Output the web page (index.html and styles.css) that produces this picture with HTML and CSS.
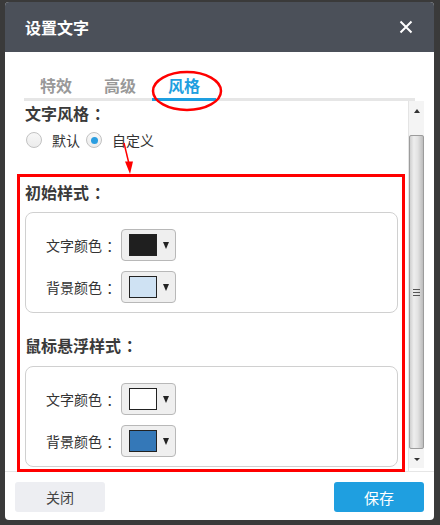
FILE: index.html
```html
<!DOCTYPE html>
<html lang="zh">
<head>
<meta charset="utf-8">
<title>设置文字</title>
<link rel="stylesheet" href="styles.css">
</head>
<body>
<div class="dialog">
  <div class="header">
    <span class="title">设置文字</span>
    <svg class="close" width="14" height="14" viewBox="0 0 14 14"><path d="M1.5 1.5 L12.5 12.5 M12.5 1.5 L1.5 12.5" stroke="#fff" stroke-width="2" fill="none"/></svg>
  </div>
  <div class="main">
    <div class="tabs">
      <span class="tab">特效</span>
      <span class="tab">高级</span>
      <span class="tab active">风格</span>
    </div>
    <div class="pane">
      <div class="content">
        <div class="heading">文字风格<span class="colon">：</span></div>
        <div class="radios">
          <label class="radio"><span class="circle"></span>默认</label>
          <label class="radio"><span class="circle checked"></span>自定义</label>
        </div>
        <div class="heading section-1">初始样式<span class="colon">：</span></div>
        <div class="group">
          <div class="row"><span class="label">文字颜色<span class="colon">：</span></span><span class="picker"><span class="swatch sw-black"></span><span class="caret"></span></span></div>
          <div class="row"><span class="label">背景颜色<span class="colon">：</span></span><span class="picker"><span class="swatch sw-light"></span><span class="caret"></span></span></div>
        </div>
        <div class="heading section-2">鼠标悬浮样式<span class="colon">：</span></div>
        <div class="group">
          <div class="row"><span class="label">文字颜色<span class="colon">：</span></span><span class="picker"><span class="swatch sw-white"></span><span class="caret"></span></span></div>
          <div class="row"><span class="label">背景颜色<span class="colon">：</span></span><span class="picker"><span class="swatch sw-blue"></span><span class="caret"></span></span></div>
        </div>
      </div>
      <div class="scrollbar">
        <div class="sb-up"><span class="tri-up"></span></div>
        <div class="sb-thumb"><span class="grip"></span></div>
        <div class="sb-down"><span class="tri-down"></span></div>
      </div>
    </div>
  </div>
  <div class="footer">
    <button class="btn">关闭</button>
    <button class="btn primary">保存</button>
  </div>
</div>
<svg class="annot" width="440" height="525" viewBox="0 0 440 525">
  <ellipse cx="187" cy="91" rx="34" ry="19" fill="none" stroke="#ff0000" stroke-width="2.5"/>
  <line x1="124" y1="143" x2="128.8" y2="163" stroke="#ff0000" stroke-width="1.5"/>
  <polygon points="125,161.5 133,161.5 130,174" fill="#ff0000"/>
  <rect x="18.5" y="175.5" width="385" height="295" fill="none" stroke="#ff0000" stroke-width="3"/>
</svg>
</body>
</html>
```
FILE: styles.css
```css
* { box-sizing: border-box; }
html, body { margin: 0; padding: 0; }
body {
  width: 440px;
  height: 525px;
  background: #3a3a3a;
  position: relative;
  overflow: hidden;
  font-family: "Noto Sans CJK SC", "Microsoft YaHei", sans-serif;
  color: #333;
}
.colon {
  padding-left: 0.3em;
}
.dialog {
  margin: 2px 6px 0 5px;
  width: 429px;
  height: 518px;
  background: #fff;
  border-radius: 4px;
  display: flex;
  flex-direction: column;
  overflow: hidden;
}
.header {
  height: 50px;
  background: #4b5059;
  display: flex;
  align-items: center;
  justify-content: space-between;
  padding: 0 21px 0 20px;
}
.title {
  color: #fff;
  font-size: 16px;
  font-weight: bold;
  line-height: 20px;
}
.close { display: block; }
.main {
  padding: 20px 10px 0 20px;
}
.tabs {
  display: flex;
  border-bottom: 3px solid #e6e6e6;
  margin-right: 9px;
  margin-left: -1px;
}
.tab {
  font-size: 16px;
  font-weight: bold;
  color: #999;
  line-height: 26px;
  padding: 0 16px;
  border-bottom: 3px solid transparent;
  margin-bottom: -3px;
}
.tab.active {
  color: #1e9fe0;
  border-bottom-color: #1e9fe0;
}
.pane {
  height: 370px;
  display: flex;
  align-items: flex-start;
  overflow: hidden;
}
.content {
  width: 384px;
  height: 370px;
  border-right: 1px solid #e4e4e4;
  overflow: hidden;
}
.heading {
  font-size: 16px;
  font-weight: bold;
  line-height: 24px;
  color: #3a3a3a;
}
.radios {
  display: flex;
  align-items: center;
  height: 24px;
  margin-top: 3px;
  font-size: 14px;
}
.radio {
  display: flex;
  align-items: center;
  line-height: 24px;
  color: #333;
}
.radio + .radio { margin-left: 6px; }
.circle {
  width: 16px;
  height: 16px;
  border-radius: 50%;
  border: 1px solid #c2c2c2;
  background: linear-gradient(#f7f7f7, #ececec);
  margin-right: 10px;
  display: flex;
  align-items: center;
  justify-content: center;
}
.radios .radio:first-child .circle { margin-left: 1px; }
.circle.checked::after {
  content: "";
  width: 7px;
  height: 7px;
  border-radius: 50%;
  background: #2a9de0;
}
.section-1 { margin-top: 28px; }
.section-2 { margin-top: 20px; }
.group {
  margin-top: 8px;
  margin-right: 10px;
  border: 1px solid #d0d0d0;
  border-radius: 8px;
  padding: 16px 20px 9px 20px;
  display: flex;
  flex-direction: column;
  gap: 10px;
}
.section-2 + .group { margin-top: 9px; }
.row {
  display: flex;
  align-items: center;
  height: 32px;
}
.label {
  font-size: 14px;
  width: 70px;
  flex: none;
  color: #333;
  line-height: 20px;
  white-space: nowrap;
}
.picker {
  margin-left: 5px;
  width: 55px;
  height: 32px;
  background: #efefef;
  border: 1px solid #b8b8b8;
  border-radius: 4px;
  display: flex;
  align-items: center;
  padding-left: 7px;
}
.swatch {
  width: 28px;
  height: 22px;
  border: 1px solid #222;
}
.sw-black { background: #1f1f1f; }
.sw-light { background: #cfe2f3; }
.sw-white { background: #ffffff; }
.sw-blue { background: #3478b8; }
.caret {
  margin-left: 6px;
  width: 0;
  height: 0;
  border-left: 3.5px solid transparent;
  border-right: 3.5px solid transparent;
  border-top: 7px solid #222;
}
.scrollbar {
  width: 15px;
  height: 367px;
  background: #f0f0f0;
  display: flex;
  flex-direction: column;
}
.sb-up {
  height: 34px;
  background: #f4f4f4;
  display: flex;
  justify-content: center;
  padding-top: 8px;
}
.tri-up {
  width: 0; height: 0;
  border-left: 3.5px solid transparent;
  border-right: 3.5px solid transparent;
  border-bottom: 4px solid #333;
}
.sb-thumb {
  height: 314px;
  border: 1px solid #9c9c9c;
  border-radius: 2px;
  background: linear-gradient(to right, #d0d0d0, #eeeeee 30%, #e2e2e2 60%, #bdbdbd);
  display: flex;
  align-items: center;
  justify-content: center;
}
.grip {
  width: 7px;
  height: 7px;
  border-top: 1px solid #555;
  border-bottom: 1px solid #555;
  position: relative;
}
.grip::after {
  content: "";
  position: absolute;
  left: 0; right: 0; top: 2px;
  border-top: 1px solid #555;
}
.sb-down {
  height: 19px;
  background: #f4f4f4;
  display: flex;
  justify-content: center;
  padding-top: 9px;
}
.tri-down {
  width: 0; height: 0;
  border-left: 3px solid transparent;
  border-right: 3px solid transparent;
  border-top: 3px solid #333;
}
.footer {
  border-top: 1px solid #e6e6e6;
  padding: 10px 10px 0 10px;
  display: flex;
  justify-content: space-between;
}
.btn {
  width: 90px;
  height: 30px;
  border: none;
  border-radius: 3px;
  font-family: inherit;
  font-size: 14px;
  background: #edeef2;
  color: #444;
  padding: 0;
}
.btn.primary {
  background: #1f9fe0;
  color: #fff;
  font-size: 15px;
}
.annot {
  position: absolute;
  left: 0;
  top: 0;
  pointer-events: none;
}
```
